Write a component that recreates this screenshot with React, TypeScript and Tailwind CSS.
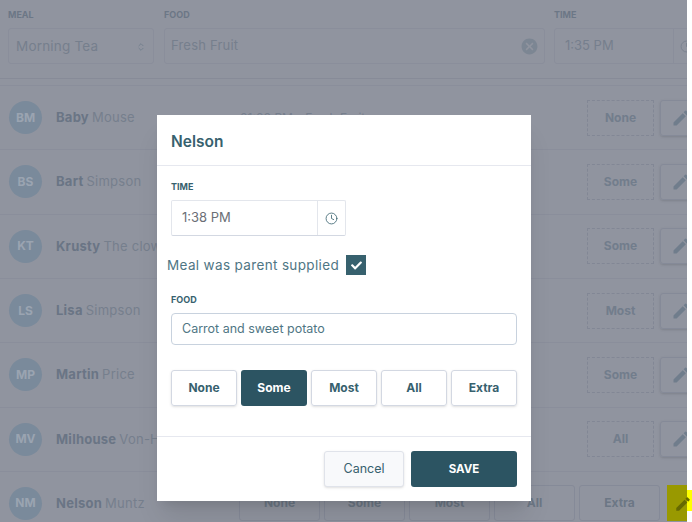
import React from "react";
import { Clock, ChevronsUpDown } from "lucide-react";
import { MdEdit, MdCancel } from "react-icons/md";
import { FaCheck } from "react-icons/fa";

type Child = {
  initials: string;
  first: string;
  last: string;
  amount: string;
  note?: string;
};

const children: Child[] = [
  { initials: "BM", first: "Baby", last: "Mouse", amount: "None", note: "01:00 PM - Fresh Fruit" },
  { initials: "BS", first: "Bart", last: "Simpson", amount: "Some" },
  { initials: "KT", first: "Krusty", last: "The clown", amount: "Some" },
  { initials: "LS", first: "Lisa", last: "Simpson", amount: "Most" },
  { initials: "MP", first: "Martin", last: "Price", amount: "Some" },
  { initials: "MV", first: "Milhouse", last: "Von-Houten", amount: "All" },
];

const amounts = ["None", "Some", "Most", "All", "Extra"];

const Label = ({ children, dim }: { children: React.ReactNode; dim?: boolean }) => (
  <div
    className={`text-[9px] leading-[14px] font-bold uppercase ${
      dim ? "text-[#6c7786]" : "text-[#37616e]"
    }`}
  >
    {children}
  </div>
);

const Avatar = ({ text }: { text: string }) => (
  <div className="flex h-[33px] w-[33px] shrink-0 items-center justify-center rounded-full bg-[#7a8a9b] text-[12px] font-bold text-[#9aa4b1]">
    {text}
  </div>
);

const Name = ({ first, last }: { first: string; last: string }) => (
  <div className="ml-[14px] flex w-[184px] shrink-0 gap-[3px] text-[13px] whitespace-nowrap tracking-[0.25px]">
    <span className="font-bold text-[#6a7585]">{first}</span>
    <span className="text-[#767f8d]">{last}</span>
  </div>
);

const EditButton = () => (
  <div className="ml-[6px] flex h-[36px] w-[40px] shrink-0 items-center rounded-[3px] border border-[#858a98] pl-[10px] shadow-sm">
    <MdEdit size={20} className="text-[#707d8c]" />
  </div>
);

const Row = ({ child }: { child: Child }) => (
  <div className="flex h-[64.33px] items-center border-b border-[#8a8e9b] pl-[9px]">
    <Avatar text={child.initials} />
    <Name first={child.first} last={child.last} />
    <span className="text-[12px] text-[#767f8d] whitespace-nowrap">{child.note}</span>
    <div className="-mr-[13px] ml-auto flex shrink-0 items-center">
      <div className="flex h-[36px] w-[67px] items-center justify-center border border-dashed border-[#828795] text-[12px] font-bold text-[#727d8c]">
        {child.amount}
      </div>
      <EditButton />
    </div>
  </div>
);

const LastRow = () => (
  <div className="flex h-[51px] items-start pl-[9px] pt-[15px]">
    <div className="flex h-[33px] items-center">
      <Avatar text="NM" />
      <Name first="Nelson" last="Muntz" />
    </div>
    <div className="-ml-[1px] -mt-[2px] flex gap-[4px]">
      {amounts.map((a) => (
        <div
          key={a}
          className="flex h-[36px] w-[81px] items-center justify-center rounded-[3px] border border-[#858a98] text-[12px] font-bold text-[#6c7785]"
        >
          {a}
        </div>
      ))}
    </div>
  </div>
);

const Modal = () => (
  <div className="absolute left-[157px] top-[115px] h-[386px] w-[374px] bg-white shadow-xl">
    <div className="flex h-[51px] items-center border-b border-[#e6e8ef] pl-[14px] pt-[3px] text-[15.5px] font-semibold text-[#37616e]">
      Nelson
    </div>
    <div className="px-[14px] pt-[14px]">
      <Label>Time</Label>
      <div className="mt-[6px] flex h-[36px] w-[175px] rounded-[2px] border border-[#e3e6ec] border-b-[#d3d8e2] text-[13px] text-[#6b6f76]">
        <div className="flex flex-1 items-center pl-[10px]">1:38 PM</div>
        <div className="flex w-[28px] items-center justify-center border-l border-[#e3e6ec]">
          <Clock size={13} className="text-[#37616e]" strokeWidth={1.5} />
        </div>
      </div>
      <div className="-ml-[4px] mt-[19px] flex h-[20px] items-center text-[13.5px] tracking-[0.35px] text-[#4f7684]">
        <span className="w-[179px] whitespace-nowrap">Meal was parent supplied</span>
        <div className="flex h-[20px] w-[20px] items-center justify-center bg-[#37616e]">
          <FaCheck size={11} className="text-white" />
        </div>
      </div>
      <div className="mt-[18px]">
        <Label>Food</Label>
      </div>
      <div className="mt-[6px] flex h-[32px] w-[346px] items-center rounded-[4px] border border-[#c8d2de] pl-[10px] text-[12.5px] text-[#4f7684]">
        Carrot and sweet potato
      </div>
      <div className="mt-[25px] flex gap-[4px]">
        {amounts.map((a) => (
          <div
            key={a}
            className={
              a === "Some"
                ? "flex h-[36px] w-[66px] items-center justify-center rounded-[3px] bg-[#2c5462] text-[12px] font-bold text-white"
                : "flex h-[36px] w-[66px] items-center justify-center rounded-[3px] border border-[#d3d8e2] text-[12px] font-bold text-[#37616e] shadow-sm"
            }
          >
            {a}
          </div>
        ))}
      </div>
    </div>
    <div className="mt-[30px] flex h-[65px] justify-end gap-[7px] border-t border-[#e6e8ef] pr-[14px] pt-[14px]">
      <div className="flex h-[36px] w-[80px] items-center justify-center rounded-[3px] border border-[#e0e3ea] bg-[#f8f9fb] text-[12.5px] text-[#37616e] shadow-sm">
        Cancel
      </div>
      <div className="flex h-[36px] w-[106px] items-center justify-center rounded-[3px] bg-[#2c5462] pt-[1px] text-[11.5px] font-bold text-white">
        SAVE
      </div>
    </div>
  </div>
);

export default function App() {
  return (
    <div
      className="relative h-[522px] w-[692px] overflow-hidden bg-white"
      style={{ fontFamily: "Inter, 'Noto Sans', sans-serif" }}
    >
      <div className="h-[522px] w-[687px] overflow-hidden bg-[#90949f]">
        <div className="flex h-[79px] gap-[10px] border-b border-[#878b98] pl-[8px] pt-[8px]">
          <div className="w-[146px] shrink-0">
            <Label dim>Meal</Label>
            <div className="mt-[6px] flex h-[36px] items-center justify-between rounded-[3px] border border-[#8a8e9b] pl-[7px] pr-[7px] pt-[1px] text-[13.5px] tracking-[0.2px] text-[#767f8d]">
              Morning Tea
              <ChevronsUpDown size={10} className="text-[#707d8c]" />
            </div>
          </div>
          <div className="w-[381px] shrink-0">
            <Label dim>Food</Label>
            <div className="mt-[6px] flex h-[36px] items-center justify-between rounded-[3px] border border-[#8a8e9b] pl-[6px] pr-[5px] text-[13px] tracking-[0.2px] text-[#767f8d]">
              Fresh Fruit
              <MdCancel size={19} className="text-[#7c8693]" />
            </div>
          </div>
          <div className="-ml-[1px] w-[140px] shrink-0">
            <Label dim>Time</Label>
            <div className="mt-[6px] flex h-[36px] rounded-[3px] border border-[#8a8e9b] text-[13px] text-[#767f8d]">
              <div className="flex w-[118px] items-center pl-[10px]">1:35 PM</div>
              <div className="flex flex-1 items-center border-l border-[#8a8e9b] pl-[6px]">
                <Clock size={13} strokeWidth={1.5} />
              </div>
            </div>
          </div>
        </div>
        <div className="mt-[6px] border-t border-[#8a8e9b]">
          {children.map((c) => (
            <Row key={c.initials} child={c} />
          ))}
          <LastRow />
        </div>
      </div>
      <div className="absolute left-[667px] top-[485px] h-[36px] w-[20px] bg-[#999900]" />
      <div className="absolute left-[687px] top-[490px] h-[21px] w-[5px] bg-[#ffff00]" />
      <MdEdit size={18} className="absolute left-[674px] top-[495px] text-[#666900]" />
      <Modal />
    </div>
  );
}
